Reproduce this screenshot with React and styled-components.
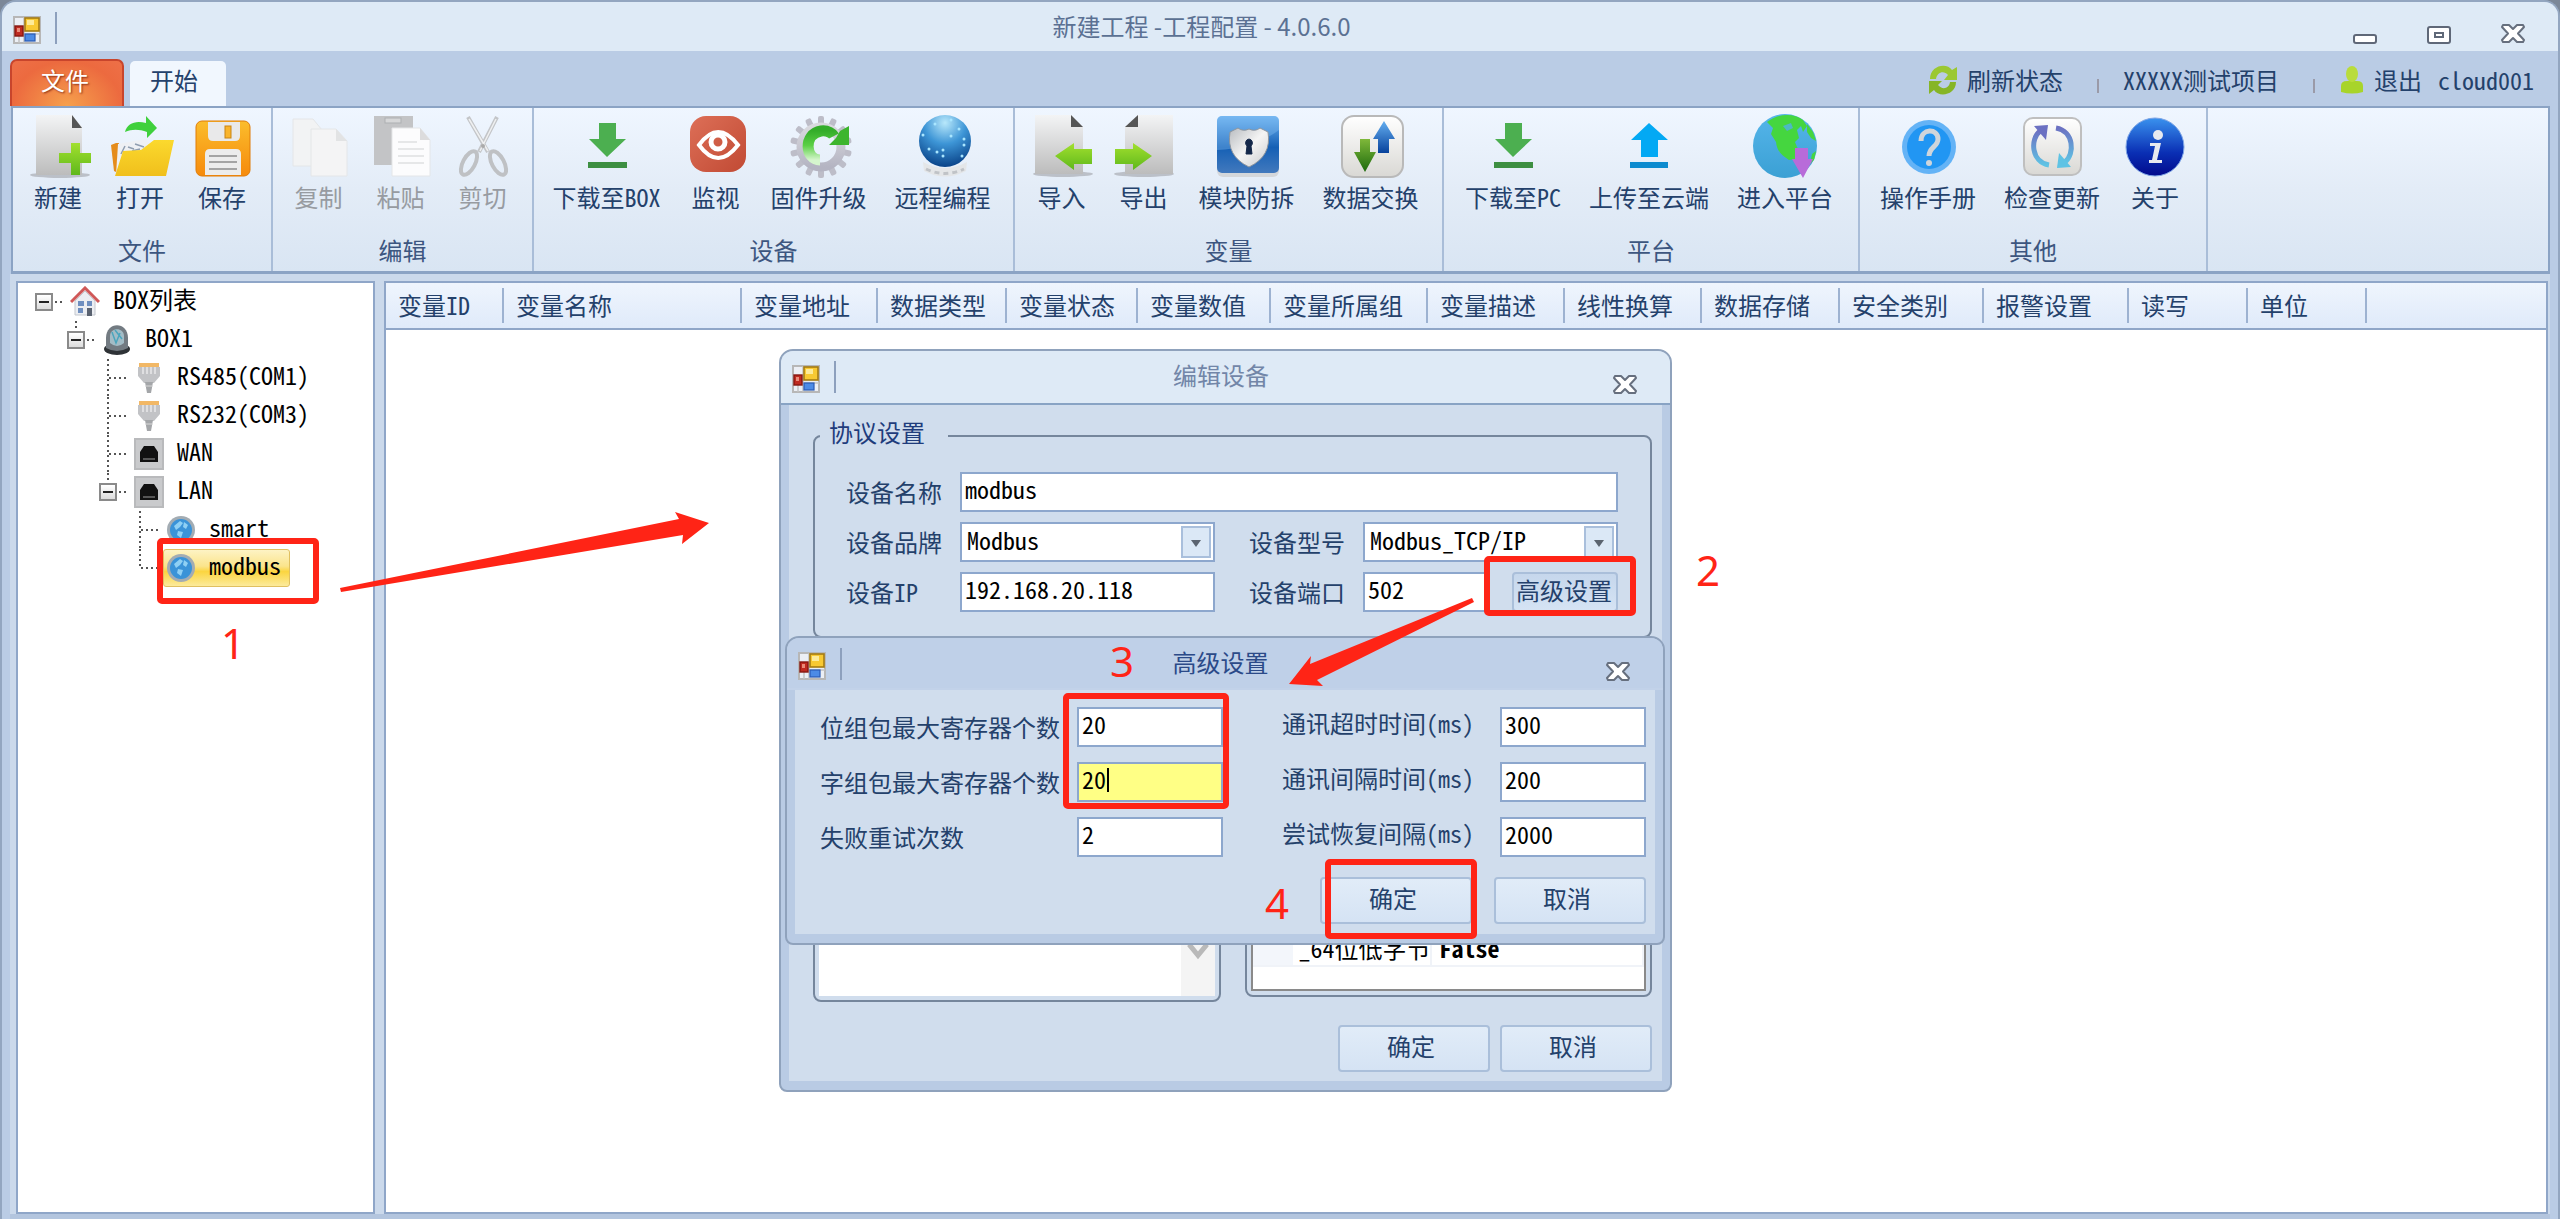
import styled, { createGlobalStyle, css } from "styled-components";

const GlobalStyle = createGlobalStyle`
  * {
    box-sizing: border-box;
  }
  body {
    margin: 0;
    background: #7b8798;
    color: #24416b;
    font-family: "Noto Sans Mono CJK SC", "Noto Sans CJK SC", monospace;
    font-size: 24px;
    line-height: 32px;
  }
  button,
  input,
  select {
    font: inherit;
    color: inherit;
  }
  ul {
    list-style: none;
    margin: 0;
    padding: 0;
  }
`;

const Window = styled.div`
  position: relative;
  display: flex;
  flex-direction: column;
  min-height: 100vh;
  border: 2px solid #93a6c0;
  border-bottom: none;
  border-radius: 16px 16px 0 0;
  background: #bacce5;
  overflow: hidden;
`;

/* title bar */
const TitleBar = styled.header`
  display: flex;
  align-items: flex-start;
  height: 49px;
  padding: 10px 32px 0 11px;
  background: #deeaf6;
  color: #5b7193;
`;
const TitleDivider = styled.span`
  width: 2px;
  height: 32px;
  margin-left: 14px;
  background: #8da0bd;
`;
const Title = styled.h1`
  flex: 1;
  margin: 0;
  padding-right: 6px;
  text-align: center;
  font-family: "Noto Sans CJK SC", sans-serif;
  font-size: 24px;
  font-weight: 400;
  line-height: 28px;
`;
const AppIconSvg = styled.svg`
  width: 28px;
  height: 28px;
  margin-top: 4px;
`;
const WindowButtons = styled.div`
  display: flex;
  gap: 48px;
  padding-top: 12px;
`;
const WindowButton = styled.button`
  display: flex;
  width: 26px;
  height: 22px;
  padding: 0;
  border: none;
  background: none;
`;

/* tabs */
const TabBar = styled.nav`
  display: flex;
  align-items: flex-end;
  height: 55px;
  padding: 0 24px 0 8px;
  background: #bacce5;
`;
const FileTab = styled.button`
  width: 114px;
  height: 47px;
  margin-right: 6px;
  padding: 0 4px 8px 0;
  border: 2px solid #c8452c;
  border-bottom: none;
  border-radius: 7px 7px 0 0;
  background: radial-gradient(ellipse at 50% 100%, #f6a04c, #ec6a3f 70%, #ee7048);
  color: #fff;
  text-shadow: 1px 1px 2px #8c3015;
`;
const HomeTab = styled.button`
  width: 96px;
  height: 45px;
  padding: 0 8px 8px 0;
  border: none;
  border-radius: 5px 5px 0 0;
  background: #f1f7fe;
`;
const Session = styled.div`
  display: flex;
  align-items: center;
  height: 52px;
  margin-left: auto;
`;
const SessionLink = styled.a`
  display: flex;
  align-items: center;
  gap: 9px;
  color: #24416b;
  text-decoration: none;
`;
const SessionDivider = styled.span`
  width: 2px;
  height: 14px;
  margin: 12px 24px 0 34px;
  background: #9a9aa8;
`;
const UserName = styled.span`
  margin-left: 16px;
`;

/* ribbon */
const Ribbon = styled.section`
  display: grid;
  grid-template-columns: 260px 261px 481px 429px 416px 348px 1fr;
  height: 168px;
  margin: 0 8px 0 9px;
  border: 2px solid #8ba3c4;
  border-width: 2px 2px 3px;
  background: linear-gradient(#eff6ff, #e3ecf7 50%, #d9e5f3);
`;
const Group = styled.div`
  display: flex;
  flex-direction: column;
  align-items: center;
  padding-top: 6px;
  border-right: 2px solid #a9bdd8;
`;
const Tools = styled.div`
  display: flex;
  padding-right: 4px;
`;
const Tool = styled.button`
  display: flex;
  flex-direction: column;
  align-items: center;
  gap: 3px;
  min-width: 82px;
  padding: 0 14px;
  border: none;
  background: none;
  white-space: nowrap;
  color: ${(p) => (p.disabled ? "#979ba1" : "#24416b")};
`;
const ToolIcon = styled.svg`
  width: 64px;
  height: 64px;
  margin: 0 -10px;
  overflow: visible;
`;
const GroupName = styled.div`
  margin-top: 21px;
  color: #3d5680;
`;

/* main area */
const Main = styled.main`
  display: flex;
  flex: 1;
  gap: 9px;
  margin: 0 8px;
  padding: 7px 2px 0 6px;
  border-bottom: 5px solid #b3c5de;
  background: #cbd9eb;
`;
const Panel = styled.section`
  border: 2px solid #8fa6c8;
  background: #fff;
`;
const TreePanel = styled(Panel)`
  width: 359px;
  padding-left: 17px;
  color: #000;
`;
const GridPanel = styled(Panel)`
  flex: 1;
`;

const dots = "#555 0 2px, transparent 2px 5px";

const Branch = styled.ul`
  margin-left: 32px;
`;
const TreeItem = styled.li`
  background: repeating-linear-gradient(${dots}) 8px 0 / 2px
    ${(p) => (p.$last ? "19px" : "100%")} no-repeat;
`;
const RootItem = styled.li``;
const TreeRow = styled.div`
  display: flex;
  align-items: center;
  height: 38px;
`;
const Gutter = styled.span`
  display: flex;
  align-items: center;
  width: ${(p) => (p.$selected ? 32 : 35)}px;
  height: 2px;
  background: repeating-linear-gradient(90deg, ${dots}) 10px 0 / 20px 2px no-repeat;
`;
const Expander = styled.button`
  width: 18px;
  height: 18px;
  padding: 0;
  border: 2px solid #8a8a8a;
  background:
    linear-gradient(#222, #222) center / 10px 2px no-repeat,
    linear-gradient(#fff, #dcdcdc);
`;
const Node = styled.span`
  display: flex;
  align-items: center;
  gap: 13px;
  ${(p) =>
    p.$selected &&
    css`
      height: 38px;
      padding: 0 8px 0 2px;
      border: 1px solid #e0c060;
      border-radius: 3px;
      background: linear-gradient(#fdf3c4, #fbe48c 45%, #fbd540 60%, #fceb9c);
    `}
`;
const NodeLabel = styled.span`
  padding-bottom: 6px;
`;
const NodeIcon = styled.svg`
  width: 30px;
  height: 32px;
`;

const Grid = styled.table`
  width: 100%;
  table-layout: fixed;
  border-collapse: collapse;
`;
const HeadCell = styled.th`
  width: ${(p) => (p.$width ? p.$width + "px" : "auto")};
  height: 46px;
  padding: 0 0 2px 12px;
  border-bottom: 2px solid #8fa6c8;
  background:
    linear-gradient(${(p) => (p.$width ? "#9db2d1, #9db2d1" : "transparent, transparent")})
      right 5px / 2px 35px no-repeat,
    linear-gradient(#eff5fd, #dfeafa);
  font-weight: 400;
  text-align: left;
  white-space: nowrap;
`;

/* dialogs */
const Dialog = styled.section`
  position: absolute;
  border: 2px solid #8fa2bc;
  border-radius: 14px 14px 8px 8px;
  background: #b9cbe4;
  overflow: hidden;
`;
const DeviceDialog = styled(Dialog)`
  left: 777px;
  top: 347px;
  width: 893px;
`;
const AdvancedDialog = styled(Dialog)`
  left: 783px;
  top: 634px;
  width: 880px;
`;
const DialogBar = styled.header`
  display: flex;
  align-items: flex-start;
  height: ${(p) => (p.$active ? 52 : 54)}px;
  padding: 10px 32px 0 11px;
  border-bottom: 2px solid ${(p) => (p.$active ? "#c2d2e9" : "#88a3c4")};
  background: ${(p) => (p.$active ? "#bfd0e8" : "#deeaf6")};
  color: ${(p) => (p.$active ? "#2b4a88" : "#7286a8")};
`;
const DialogClose = styled(WindowButton)`
  margin-top: 14px;
`;
const DialogBody = styled.form`
  margin: 0 8px 9px;
  background: #d0dded;
`;
const DeviceBody = styled(DialogBody)`
  padding: 15px 10px 9px 24px;
`;
const Fieldset = styled.fieldset`
  min-width: 0;
  margin: 0;
  padding: 20px 32px 24px 31px;
  border: 2px solid #75869c;
  border-radius: 8px;
`;
const Legend = styled.legend`
  margin-left: -26px;
  padding: 0 23px 8px 9px;
  line-height: 24px;
  color: #1f3c7c;
`;
const Fields = styled.div`
  display: grid;
  grid-template-columns: 114px 1fr 148px 1fr;
  row-gap: 10px;
  align-items: center;
`;
const Label = styled.label`
  white-space: nowrap;
  padding-left: ${(p) => (p.$second ? 34 : 0)}px;
`;
const Input = styled.input`
  width: 100%;
  min-width: 0;
  height: 40px;
  padding: 0 3px 8px;
  border: 2px solid #8da7cd;
  border-radius: 0;
  outline: none;
  background: ${(p) => (p.$editing ? "#ffff85" : "#fff")};
  color: #000;
`;
const WideInput = styled(Input)`
  grid-column: span 3;
`;
const SelectBox = styled.div`
  position: relative;
`;
const Select = styled.select`
  display: block;
  width: 100%;
  height: 40px;
  padding: 0 40px 4px 5px;
  border: 2px solid #8da7cd;
  border-radius: 0;
  appearance: none;
  background: #fff;
  color: #000;
`;
const SelectArrow = styled.svg`
  position: absolute;
  top: 4px;
  right: 4px;
  width: 30px;
  height: 32px;
  border: 2px solid #a9bfdc;
  background: #dbe8f6;
  pointer-events: none;
`;
const PortCell = styled.div`
  display: flex;
  gap: 22px;
`;
const Button = styled.button`
  width: 152px;
  height: 47px;
  padding: 0 6px 6px 0;
  border: 2px solid #aabfda;
  border-radius: 4px;
  background: linear-gradient(#e1ecf8, #d5e3f4);
  white-space: nowrap;
`;
const AdvancedButton = styled(Button)`
  flex: none;
  width: 106px;
  height: 40px;
  padding: 0 2px 8px 0;
  background: linear-gradient(#c6d7ec, #d5e3f4);
`;
const Lists = styled.div`
  display: flex;
  align-items: flex-start;
  gap: 24px;
  margin-top: 14px;
`;
const ListFrame = styled.div`
  display: flex;
  flex: 1;
  height: ${(p) => p.$height}px;
  padding: 0 4px 4px;
  border: 2px solid #75869c;
  border-radius: 8px;
`;
const ListBox = styled.div`
  display: flex;
  flex: 1;
  align-items: flex-end;
  justify-content: flex-end;
  background: #fff;
`;
const ScrollBar = styled.svg`
  width: 34px;
  height: 100%;
  background: #f4f4f4;
`;
const Properties = styled.div`
  display: flex;
  flex: 1;
  flex-direction: column;
  justify-content: flex-end;
  padding-bottom: 22px;
  border: 2px solid #8a8a8a;
  background: #fff;
  color: #000;
`;
const PropertyTable = styled.table`
  width: 100%;
  table-layout: fixed;
  border-collapse: collapse;
  td,
  th {
    height: 34px;
    padding: 0 0 2px 8px;
    border-bottom: 2px solid #f0f3f8;
    border-right: 2px solid #f0f3f8;
    text-align: left;
    line-height: 30px;
    white-space: nowrap;
  }
  th {
    width: 178px;
    padding-left: 46px;
    font-weight: 400;
    background: linear-gradient(#f3f6fb, #f3f6fb) 0 0 / 40px 100% no-repeat;
  }
  td {
    font-weight: 700;
  }
`;
const Actions = styled.div`
  display: flex;
  justify-content: flex-end;
  gap: ${(p) => p.$gap}px;
  margin-top: ${(p) => p.$top}px;
`;
const AdvancedBody = styled(DialogBody)`
  padding: 17px 9px 10px 25px;
`;
const AdvancedFields = styled.div`
  display: grid;
  grid-template-columns: 257px 146px 277px 146px;
  row-gap: 15px;
  align-items: center;
`;
const AdvancedLabel = styled(Label)`
  padding-left: ${(p) => (p.$second ? 59 : 0)}px;
  padding-bottom: ${(p) => (p.$second ? 8 : 0)}px;
`;
const Editing = styled.div`
  position: relative;
  &::after {
    content: "";
    position: absolute;
    left: 30px;
    top: 6px;
    width: 2px;
    height: 24px;
    background: #000;
  }
`;

/* step markers drawn over the windows */
const Marker = styled.div`
  position: absolute;
  left: ${(p) => p.$x}px;
  top: ${(p) => p.$y}px;
  width: ${(p) => p.$w}px;
  height: ${(p) => p.$h}px;
  border: 6px solid #ff2416;
  border-radius: 5px;
  pointer-events: none;
`;
const Step = styled.span`
  position: absolute;
  left: ${(p) => p.$x}px;
  top: ${(p) => p.$y}px;
  color: #ff2416;
  font-family: "Noto Sans", sans-serif;
  font-size: 42px;
  line-height: 48px;
`;
const Arrows = styled.svg`
  position: absolute;
  left: 0;
  top: 0;
  width: 1700px;
  height: 800px;
  fill: #ff2416;
  pointer-events: none;
`;

function AppIcon() {
  return (
    <AppIconSvg viewBox="0 0 28 28">
      <rect x="1" y="1" width="26" height="26" fill="#eceff5" stroke="#b7b7b7" strokeWidth="2" />
      <path d="M1 18H27M11 1V27M6 18V27" stroke="#c2c2c2" strokeWidth="1.5" />
      <rect x="12" y="2" width="14" height="13" fill="#f8c933" stroke="#a57c12" strokeWidth="1.6" />
      <rect x="14" y="4" width="7" height="5" fill="#fdeb9a" />
      <rect x="2" y="10" width="8" height="10" fill="#bf2a20" stroke="#861711" strokeWidth="1.4" />
      <rect x="4" y="12" width="3" height="4" fill="#ea8a78" />
      <rect x="12" y="18" width="10" height="7" fill="#4c8be6" stroke="#2a5bb5" strokeWidth="1.2" />
    </AppIconSvg>
  );
}

function CloseGlyph() {
  return (
    <svg width="26" height="20" viewBox="0 0 26 20">
      <path
        d="M3 1H9L13 5L17 1H23L24 3L18 9.500L24 16L23 18H17L13 14L9 18H3L2 16L8 9.500L2 3Z"
        fill="#fff"
        stroke="#666f7e"
        strokeWidth="2"
        strokeLinejoin="round"
      />
    </svg>
  );
}

function Defs() {
  return (
    <svg width="0" height="0" style={{ position: "absolute" }}>
      <defs>
        <linearGradient id="page" x1="0" y1="0" x2="0" y2="1">
          <stop offset="0" stopColor="#f3f4f5" />
          <stop offset="1" stopColor="#bcbcbc" />
        </linearGradient>
        <linearGradient id="lime" x1="0" y1="0" x2="0" y2="1">
          <stop offset="0" stopColor="#a2e02e" />
          <stop offset="1" stopColor="#5fb81c" />
        </linearGradient>
        <linearGradient id="orange" x1="0" y1="0" x2="0" y2="1">
          <stop offset="0" stopColor="#fbbd2c" />
          <stop offset="1" stopColor="#f68a0c" />
        </linearGradient>
        <linearGradient id="folder" x1="0" y1="0" x2="0" y2="1">
          <stop offset="0" stopColor="#fbd92e" />
          <stop offset="1" stopColor="#f0bf1c" />
        </linearGradient>
        <linearGradient id="red" x1="0" y1="0" x2="1" y2="1">
          <stop offset="0" stopColor="#dd6f57" />
          <stop offset="1" stopColor="#c14a34" />
        </linearGradient>
        <linearGradient id="steel" x1="0" y1="0" x2="0" y2="1">
          <stop offset="0" stopColor="#d9d9de" />
          <stop offset="1" stopColor="#b4b4c2" />
        </linearGradient>
        <linearGradient id="green" x1="0" y1="0" x2="0" y2="1">
          <stop offset="0" stopColor="#34ad2a" />
          <stop offset="0.500" stopColor="#5bd045" />
          <stop offset="1" stopColor="#d5f5cd" />
        </linearGradient>
        <radialGradient id="ball" cx="0.500" cy="0.150" r="0.900">
          <stop offset="0" stopColor="#b8e8fb" />
          <stop offset="0.450" stopColor="#3d95d6" />
          <stop offset="1" stopColor="#043a80" />
        </radialGradient>
        <linearGradient id="blue" x1="0" y1="0" x2="0" y2="1">
          <stop offset="0" stopColor="#6bb1f0" />
          <stop offset="0.550" stopColor="#1560b5" />
          <stop offset="1" stopColor="#4279bd" />
        </linearGradient>
        <linearGradient id="silver" x1="0" y1="0" x2="1" y2="1">
          <stop offset="0" stopColor="#b9bcc0" />
          <stop offset="0.500" stopColor="#f4f4f4" />
          <stop offset="1" stopColor="#c9cbce" />
        </linearGradient>
        <linearGradient id="tile" x1="0" y1="0" x2="0" y2="1">
          <stop offset="0" stopColor="#fff" />
          <stop offset="1" stopColor="#d9d8d4" />
        </linearGradient>
        <linearGradient id="down" x1="0" y1="0" x2="0" y2="1">
          <stop offset="0" stopColor="#7fb83a" />
          <stop offset="1" stopColor="#1c6a0c" />
        </linearGradient>
        <linearGradient id="up" x1="0" y1="0" x2="0" y2="1">
          <stop offset="0" stopColor="#64aef0" />
          <stop offset="1" stopColor="#07429c" />
        </linearGradient>
        <linearGradient id="about" x1="0" y1="0" x2="0" y2="1">
          <stop offset="0" stopColor="#3a92ee" />
          <stop offset="0.600" stopColor="#0a2fb4" />
          <stop offset="1" stopColor="#020a8c" />
        </linearGradient>
        <linearGradient id="cycle" x1="0" y1="0" x2="0" y2="1">
          <stop offset="0" stopColor="#6c71c2" />
          <stop offset="1" stopColor="#5fc3e4" />
        </linearGradient>
        <linearGradient id="sea" x1="0" y1="0" x2="0" y2="1">
          <stop offset="0" stopColor="#55b5ea" />
          <stop offset="1" stopColor="#3ba0d4" />
        </linearGradient>
      </defs>
    </svg>
  );
}

const teeth = Array.from({ length: 14 }, (_, i) => (i * 360) / 14);

const icons = {
  create: (
    <>
      <ellipse cx="34" cy="61" rx="30" ry="3" fill="#a9adb3" opacity="0.700" />
      <path d="M10 1H46L56 13V61H10Z" fill="url(#page)" />
      <path d="M46 1L56 14H46Z" fill="#555" />
      <path d="M45 29h9v10h11v10H54v12h-9V49H33V39h12Z" fill="url(#lime)" />
    </>
  ),
  open: (
    <>
      <path d="M3 31l5-2 3 0-1 30-4-2Z" fill="#e58c1c" />
      <path d="M10 30l28-5 8 10-30 24-8 2Z" fill="#eef0f4" />
      <path d="M13 40l4-8M20 33l6 2M27 30l9 3M24 37l8-2" stroke="#8e9db0" strokeWidth="1.500" />
      <path d="M33 36L46 26H66L58 62H7L15 37Z" fill="url(#folder)" />
      <path d="M17 18C19 9 28 6 38 9V2L49 14L39 24V18C31 15 24 15 17 18Z" fill="#3fd03c" />
    </>
  ),
  save: (
    <>
      <rect x="6" y="7" width="54" height="55" rx="6" fill="url(#orange)" stroke="#e07c08" />
      <path d="M18 8H50V22Q50 27 45 27H23Q18 27 18 22Z" fill="#e9e9ea" />
      <rect x="35" y="12" width="6" height="12" fill="#f9b42c" stroke="#c98412" />
      <path d="M15 61V40Q15 35 20 35H46Q51 35 51 40V61Z" fill="#ececec" />
      <path d="M19 42H47M19 48H47M19 55H47" stroke="#a4a4a4" strokeWidth="2" />
    </>
  ),
  copy: (
    <>
      <path d="M6 5H26L35 16V52H6Z" fill="#f2f3f4" stroke="#e4e6e8" />
      <path d="M24 15H49L60 27V62H24Z" fill="#f4f4f5" stroke="#e4e6e8" />
      <path d="M49 15L60 27H49Z" fill="#e2e3e4" />
    </>
  ),
  paste: (
    <>
      <rect x="5" y="2" width="39" height="49" fill="#c3c4c6" />
      <rect x="16" y="4" width="16" height="5" fill="#d6d7d8" stroke="#adafb2" />
      <path d="M23 14H51L61 26V62H23Z" fill="#fcfcfd" stroke="#e4e6e8" />
      <path d="M51 14L61 26H51Z" fill="#dcdcdd" />
      <path d="M29 28H48M29 35H55M29 42H55M29 49H55" stroke="#e6e7e8" strokeWidth="2" />
    </>
  ),
  cut: (
    <g fill="none">
      <path d="M17 3L37 38M46 3L28 38" stroke="#c3c5c8" strokeWidth="4" />
      <path d="M18 5L37 37M45 5L29 37" stroke="#eff0f1" strokeWidth="1.500" />
      <ellipse cx="18" cy="49" rx="6" ry="13" transform="rotate(28 18 49)" stroke="#bfc1c4" strokeWidth="4" />
      <ellipse cx="47" cy="49" rx="6" ry="13" transform="rotate(-28 47 49)" stroke="#bfc1c4" strokeWidth="4" />
      <circle cx="32" cy="32" r="2" fill="#aaa" />
    </g>
  ),
  download: (
    <>
      <path d="M24 9H41V25H51L32 43L14 25H24Z" fill="#4caf50" />
      <rect x="13" y="48" width="39" height="6" fill="#3d8f42" />
    </>
  ),
  monitor: (
    <>
      <rect x="6" y="2" width="56" height="56" rx="16" fill="url(#red)" />
      <path d="M15 31Q34 5 54 31Q34 57 15 31Z" fill="none" stroke="#fff" strokeWidth="4" />
      <circle cx="34" cy="28" r="7" fill="none" stroke="#fff" strokeWidth="5" />
    </>
  ),
  firmware: (
    <>
      {teeth.map((a) => (
        <rect key={a} x="31" y="2" width="6" height="12" rx="2" fill="#bdbdc8" transform={`rotate(${a} 34 33)`} />
      ))}
      <circle cx="34" cy="33" r="20" fill="none" stroke="url(#steel)" strokeWidth="9" />
      <path d="M33 46C18 46 16 20 34 17C41 16 46 20 47 22" fill="none" stroke="url(#green)" strokeWidth="11" />
      <path d="M62 12V31H42L49 24L53 17Z" fill="#3db52e" />
    </>
  ),
  remote: (
    <>
      <path d="M12 48Q34 60 56 48L55 57Q34 68 13 57Z" fill="#e4e6e8" />
      <path d="M15 55Q34 64 53 55" stroke="#c0c3c7" strokeWidth="3" fill="none" strokeDasharray="5 4" />
      <circle cx="34" cy="27" r="26" fill="url(#ball)" />
      {[[24, 10], [40, 6], [48, 15], [40, 22], [53, 25], [53, 31], [18, 35], [26, 38], [32, 36], [32, 42], [51, 42], [12, 21]].map(([x, y]) => (
        <circle key={`${x}-${y}`} cx={x} cy={y} r="1.500" fill="#a9e6ff" />
      ))}
    </>
  ),
  importer: (
    <>
      <ellipse cx="33" cy="60" rx="30" ry="3" fill="#a9adb3" opacity="0.700" />
      <path d="M5 1H41L53 13V60H5Z" fill="url(#page)" />
      <path d="M41 1L53 13H41Z" fill="#555" />
      <path d="M25 42L44 29V35H62V50H44V56Z" fill="url(#lime)" />
    </>
  ),
  exporter: (
    <>
      <ellipse cx="32" cy="60" rx="30" ry="3" fill="#a9adb3" opacity="0.700" />
      <path d="M61 1H26L13 13V60H61Z" fill="url(#page)" />
      <path d="M26 1V13H13Z" fill="#555" />
      <path d="M40 42L21 29V35H3V50H21V56Z" fill="url(#lime)" />
    </>
  ),
  shield: (
    <>
      <rect x="2" y="5" width="62" height="58" rx="6" fill="#d4d7db" />
      <rect x="2" y="2" width="62" height="57" rx="5" fill="url(#blue)" />
      <path d="M2 36Q40 34 64 16V7Q64 2 59 2H7Q2 2 2 7Z" fill="#8cc6f5" opacity="0.350" />
      <path d="M15 18L23 14Q28 18 34 15Q40 18 45 14L53 18Q57 42 34 53Q11 42 15 18Z" fill="url(#silver)" stroke="#8d959e" />
      <path d="M34 25a4 4 0 0 1 2 7l1 8h-6l1-8a4 4 0 0 1 2-7Z" fill="#14284a" stroke="#14284a" />
    </>
  ),
  exchange: (
    <>
      <rect x="3" y="2" width="61" height="61" rx="12" fill="url(#tile)" stroke="#b9b9b9" strokeWidth="2" />
      <path d="M21 25H31V38H37L26 58L15 38H21Z" fill="url(#down)" />
      <path d="M39 39H50V25H56L45 7L34 25H39Z" fill="url(#up)" />
    </>
  ),
  upload: (
    <>
      <path d="M24 43H41V26H51L32 9L14 26H24Z" fill="#03a9f4" />
      <rect x="13" y="48" width="38" height="6" fill="#0d8bcf" />
    </>
  ),
  platform: (
    <>
      <circle cx="32" cy="32" r="32" fill="url(#sea)" />
      <path d="M14 8C24 0 40 -2 50 6L54 12L50 18L48 12L44 16L46 24L42 28L44 33L46 36L42 45L36 46C30 42 24 38 23 28L18 20L20 14Z" fill="#45d63f" />
      <path d="M54 10L60 18L63 27L58 24L54 18Z" fill="#45d63f" />
      <path d="M30 12L38 9L40 14L34 17Z" fill="#4fb0e6" opacity="0.800" />
      <path d="M59 40l4-3-2 9-4 4Z" fill="#45d63f" />
      <path d="M42 34H55V45H60L50 64L39 45H42Z" fill="#b86bd9" />
    </>
  ),
  help: (
    <>
      <circle cx="33" cy="33" r="27" fill="#64b3f6" />
      <circle cx="33" cy="33" r="22" fill="#2196f3" />
      <path d="M25 27C25 14 42 14 42 25C42 33 33 33 33 42" fill="none" stroke="#cfd5db" strokeWidth="5" />
      <circle cx="33" cy="49" r="3" fill="#cfd5db" />
    </>
  ),
  update: (
    <>
      <rect x="4" y="4" width="57" height="57" rx="9" fill="url(#tile)" stroke="#bfbfbf" strokeWidth="2" />
      <g fill="none" stroke="url(#cycle)" strokeWidth="5">
        <path d="M36 14C54 17 55 40 45 48" />
        <path d="M29 51C11 48 10 25 20 17" />
      </g>
      <path d="M14 12L28 11L26 26Z" fill="#6c71c2" />
      <path d="M51 53L37 54L39 39Z" fill="#5fc3e4" />
    </>
  ),
  about: (
    <>
      <circle cx="32" cy="33" r="29" fill="url(#about)" stroke="#7ea5e6" />
      <circle cx="35" cy="21" r="5" fill="#e7e9ef" />
      <path d="M27 29H38L34 46H39V49H26V46H29L32 32H27Z" fill="#e7e9ef" />
    </>
  ),
};

const groups = [
  {
    name: "文件",
    tools: [["新建", "create"], ["打开", "open"], ["保存", "save"]],
  },
  {
    name: "编辑",
    disabled: true,
    tools: [["复制", "copy"], ["粘贴", "paste"], ["剪切", "cut"]],
  },
  {
    name: "设备",
    tools: [["下载至BOX", "download"], ["监视", "monitor"], ["固件升级", "firmware"], ["远程编程", "remote"]],
  },
  {
    name: "变量",
    tools: [["导入", "importer"], ["导出", "exporter"], ["模块防拆", "shield"], ["数据交换", "exchange"]],
  },
  {
    name: "平台",
    tools: [["下载至PC", "download"], ["上传至云端", "upload"], ["进入平台", "platform"]],
  },
  {
    name: "其他",
    tools: [["操作手册", "help"], ["检查更新", "update"], ["关于", "about"]],
  },
];

const nodeIcons = {
  home: (
    <>
      <path d="M5 15V29H25V15L15 5Z" fill="#eceef2" stroke="#c3c7ce" />
      <path d="M1 16L15 2L29 16" fill="none" stroke="#cf5858" strokeWidth="3" />
      <path d="M8 15h6v5H8ZM8 22h5v5H8ZM17 15h5v5h-5Z" fill="#6f8fc0" />
      <rect x="17" y="22" width="5" height="8" fill="#5a6270" />
    </>
  ),
  box: (
    <>
      <ellipse cx="15" cy="25" rx="13" ry="6" fill="#2e3236" />
      <path d="M4 24V14C4 -3 26 -3 26 14V24Q15 30 4 24Z" fill="#737b82" />
      <path d="M8 19V12C8 3 22 3 22 12V19Q15 25 8 19Z" fill="#a3bcc6" />
      <path d="M10 8L14 19L18 9M13 6L20 15" stroke="#4aa5bd" strokeWidth="1.500" fill="none" />
    </>
  ),
  plug: (
    <>
      <rect x="5" y="1" width="20" height="5" fill="#f2b866" />
      <path d="M4 5H26V14L20 21H10L4 14Z" fill="#c2c3c6" />
      <path d="M9 5V12M13 5V12M17 5V12M21 5V12" stroke="#e9e9ea" strokeWidth="1.500" />
      <path d="M11 20H19L17 31H13Z" fill="#a4a6a9" />
      <path d="M11 24H19" stroke="#d9d9d9" />
    </>
  ),
  port: (
    <>
      <rect x="0" y="0" width="30" height="32" fill="#b9babc" />
      <rect x="2" y="2" width="26" height="28" fill="#c9cacc" />
      <path d="M6 24V14L10 8H20L24 14V24Z" fill="#111" />
      <path d="M9 21H21" stroke="#555" strokeWidth="2" />
    </>
  ),
  device: (
    <>
      <circle cx="15" cy="16" r="14" fill="#a3acb3" />
      <circle cx="15" cy="16" r="11" fill="#3a93d8" />
      <path d="M8 12L14 7L17 9L14 13L10 16ZM18 8L22 11L20 15L17 13ZM12 17L17 18L15 24L11 21Z" fill="#8fd0f4" />
    </>
  ),
};

const tree = {
  label: "BOX列表",
  icon: "home",
  children: [
    {
      label: "BOX1",
      icon: "box",
      children: [
        { label: "RS485(COM1)", icon: "plug" },
        { label: "RS232(COM3)", icon: "plug" },
        { label: "WAN", icon: "port" },
        {
          label: "LAN",
          icon: "port",
          children: [
            { label: "smart", icon: "device" },
            { label: "modbus", icon: "device", selected: true },
          ],
        },
      ],
    },
  ],
};

const columns = [
  ["变量ID", 118],
  ["变量名称", 238],
  ["变量地址", 136],
  ["数据类型", 129],
  ["变量状态", 131],
  ["变量数值", 133],
  ["变量所属组", 157],
  ["变量描述", 137],
  ["线性换算", 137],
  ["数据存储", 138],
  ["安全类别", 144],
  ["报警设置", 145],
  ["读写", 119],
  ["单位", 119],
  ["", 0],
];

function TreeNode({ node, root, last }) {
  const Item = root ? RootItem : TreeItem;
  return (
    <Item $last={last}>
      <TreeRow>
        <Gutter $selected={node.selected}>{node.children && <Expander type="button" aria-label="折叠" />}</Gutter>
        <Node $selected={node.selected}>
          <NodeIcon viewBox="0 0 30 32">{nodeIcons[node.icon]}</NodeIcon>
          <NodeLabel>{node.label}</NodeLabel>
        </Node>
      </TreeRow>
      {node.children && (
        <Branch>
          {node.children.map((child, i) => (
            <TreeNode key={child.label} node={child} last={i === node.children.length - 1} />
          ))}
        </Branch>
      )}
    </Item>
  );
}

function DropArrow() {
  return (
    <SelectArrow viewBox="0 0 26 28">
      <path d="M8 12H18L13 19Z" fill="#5b6470" />
    </SelectArrow>
  );
}

function EditDevice() {
  return (
    <DeviceDialog>
      <DialogBar>
        <AppIcon />
        <TitleDivider />
        <Title as="h2">编辑设备</Title>
        <DialogClose type="button" aria-label="关闭">
          <CloseGlyph />
        </DialogClose>
      </DialogBar>
      <DeviceBody>
        <Fieldset>
          <Legend>协议设置</Legend>
          <Fields>
            <Label htmlFor="name">设备名称</Label>
            <WideInput id="name" defaultValue="modbus" />
            <Label htmlFor="brand">设备品牌</Label>
            <SelectBox>
              <Select id="brand">
                <option>Modbus</option>
              </Select>
              <DropArrow />
            </SelectBox>
            <Label htmlFor="model" $second>设备型号</Label>
            <SelectBox>
              <Select id="model">
                <option>Modbus_TCP/IP</option>
              </Select>
              <DropArrow />
            </SelectBox>
            <Label htmlFor="ip">设备IP</Label>
            <Input id="ip" defaultValue="192.168.20.118" />
            <Label htmlFor="port" $second>设备端口</Label>
            <PortCell>
              <Input id="port" defaultValue="502" />
              <AdvancedButton type="button">高级设置</AdvancedButton>
            </PortCell>
          </Fields>
        </Fieldset>
        <Lists>
          <ListFrame $height={350}>
            <ListBox>
              <ScrollBar viewBox="0 0 34 344" preserveAspectRatio="xMidYMax meet">
                <path d="M8 292L17 303L26 292" fill="none" stroke="#b9b9b9" strokeWidth="5" />
              </ScrollBar>
            </ListBox>
          </ListFrame>
          <ListFrame $height={345}>
            <Properties>
              <PropertyTable>
                <tbody>
                  <tr>
                    <th scope="row">_64位低字节</th>
                    <td>False</td>
                  </tr>
                </tbody>
              </PropertyTable>
            </Properties>
          </ListFrame>
        </Lists>
        <Actions $gap={10} $top={23}>
          <Button type="button">确定</Button>
          <Button type="button">取消</Button>
        </Actions>
      </DeviceBody>
    </DeviceDialog>
  );
}

function AdvancedSettings() {
  return (
    <AdvancedDialog>
      <DialogBar $active>
        <AppIcon />
        <TitleDivider />
        <Title as="h2">高级设置</Title>
        <DialogClose type="button" aria-label="关闭">
          <CloseGlyph />
        </DialogClose>
      </DialogBar>
      <AdvancedBody>
        <AdvancedFields>
          <AdvancedLabel htmlFor="bits">位组包最大寄存器个数</AdvancedLabel>
          <Input id="bits" defaultValue="20" />
          <AdvancedLabel htmlFor="timeout" $second>通讯超时时间(ms)</AdvancedLabel>
          <Input id="timeout" defaultValue="300" />
          <AdvancedLabel htmlFor="words">字组包最大寄存器个数</AdvancedLabel>
          <Editing>
            <Input id="words" defaultValue="20" $editing />
          </Editing>
          <AdvancedLabel htmlFor="interval" $second>通讯间隔时间(ms)</AdvancedLabel>
          <Input id="interval" defaultValue="200" />
          <AdvancedLabel htmlFor="retries">失败重试次数</AdvancedLabel>
          <Input id="retries" defaultValue="2" />
          <AdvancedLabel htmlFor="recover" $second>尝试恢复间隔(ms)</AdvancedLabel>
          <Input id="recover" defaultValue="2000" />
        </AdvancedFields>
        <Actions $gap={22} $top={20}>
          <Button type="button">确定</Button>
          <Button type="button">取消</Button>
        </Actions>
      </AdvancedBody>
    </AdvancedDialog>
  );
}

function App() {
  return (
    <Window>
      <GlobalStyle />
      <Defs />
      <TitleBar>
        <AppIcon />
        <TitleDivider />
        <Title>新建工程 -工程配置 - 4.0.6.0</Title>
        <WindowButtons>
          <WindowButton type="button" aria-label="最小化">
            <svg width="26" height="22" viewBox="0 0 26 22">
              <rect x="2" y="11" width="22" height="8" rx="2" fill="#fff" stroke="#5f6878" strokeWidth="2" />
            </svg>
          </WindowButton>
          <WindowButton type="button" aria-label="最大化">
            <svg width="26" height="22" viewBox="0 0 26 22">
              <rect x="2" y="3" width="22" height="16" rx="2" fill="#fff" stroke="#5f6878" strokeWidth="2" />
              <rect x="9" y="9" width="8" height="4" fill="#fff" stroke="#5f6878" strokeWidth="2" />
            </svg>
          </WindowButton>
          <WindowButton type="button" aria-label="关闭">
            <CloseGlyph />
          </WindowButton>
        </WindowButtons>
      </TitleBar>
      <TabBar>
        <FileTab type="button">文件</FileTab>
        <HomeTab type="button">开始</HomeTab>
        <Session>
          <SessionLink href="#refresh">
            <svg width="30" height="32" viewBox="0 0 30 32">
              <path d="M2 15C2 1 19 -2 24 6L29 3V16H16L20 11C16 6 9 8 8 15Z" fill="#9bc832" />
              <path d="M28 18C28 31 11 34 6 26L1 30V17H14L10 21C14 26 21 25 22 18Z" fill="#86b526" />
            </svg>
            刷新状态
          </SessionLink>
          <SessionDivider />
          <SessionLink href="#project">XXXXX测试项目</SessionLink>
          <SessionDivider />
          <SessionLink href="#logout">
            <svg width="26" height="28" viewBox="0 0 26 28">
              <path d="M2 26V20Q2 15 8 15H18Q24 15 24 20V26Q13 29 2 26Z" fill="#a8d42a" />
              <ellipse cx="13" cy="8" rx="6" ry="8" fill="#b9dc3c" />
            </svg>
            退出
          </SessionLink>
          <UserName>cloud001</UserName>
        </Session>
      </TabBar>
      <Ribbon>
        {groups.map((group) => (
          <Group key={group.name}>
            <Tools>
              {group.tools.map(([label, icon]) => (
                <Tool key={label} type="button" disabled={group.disabled}>
                  <ToolIcon viewBox="0 0 64 64">{icons[icon]}</ToolIcon>
                  {label}
                </Tool>
              ))}
            </Tools>
            <GroupName>{group.name}</GroupName>
          </Group>
        ))}
      </Ribbon>
      <Main>
        <TreePanel>
          <ul>
            <TreeNode node={tree} root />
          </ul>
        </TreePanel>
        <GridPanel>
          <Grid>
            <thead>
              <tr>
                {columns.map(([name, width]) => (
                  <HeadCell key={name} $width={width}>
                    {name}
                  </HeadCell>
                ))}
              </tr>
            </thead>
          </Grid>
        </GridPanel>
      </Main>
      <EditDevice />
      <AdvancedSettings />
      <Arrows viewBox="0 0 1700 800">
        <path d="M338 586L677 517L673 510L707 521L680 542L681 533L339 590Z" />
        <path d="M1470 596L1308 662L1309 654L1287 682L1321 684L1315 678L1472 600Z" />
      </Arrows>
      <Marker $x={155} $y={536} $w={162} $h={66} />
      <Marker $x={1482} $y={554} $w={152} $h={60} />
      <Marker $x={1061} $y={691} $w={166} $h={116} />
      <Marker $x={1323} $y={857} $w={152} $h={80} />
      <Step $x={219} $y={617}>1</Step>
      <Step $x={1694} $y={544}>2</Step>
      <Step $x={1108} $y={635}>3</Step>
      <Step $x={1263} $y={877}>4</Step>
    </Window>
  );
}

export default App;
